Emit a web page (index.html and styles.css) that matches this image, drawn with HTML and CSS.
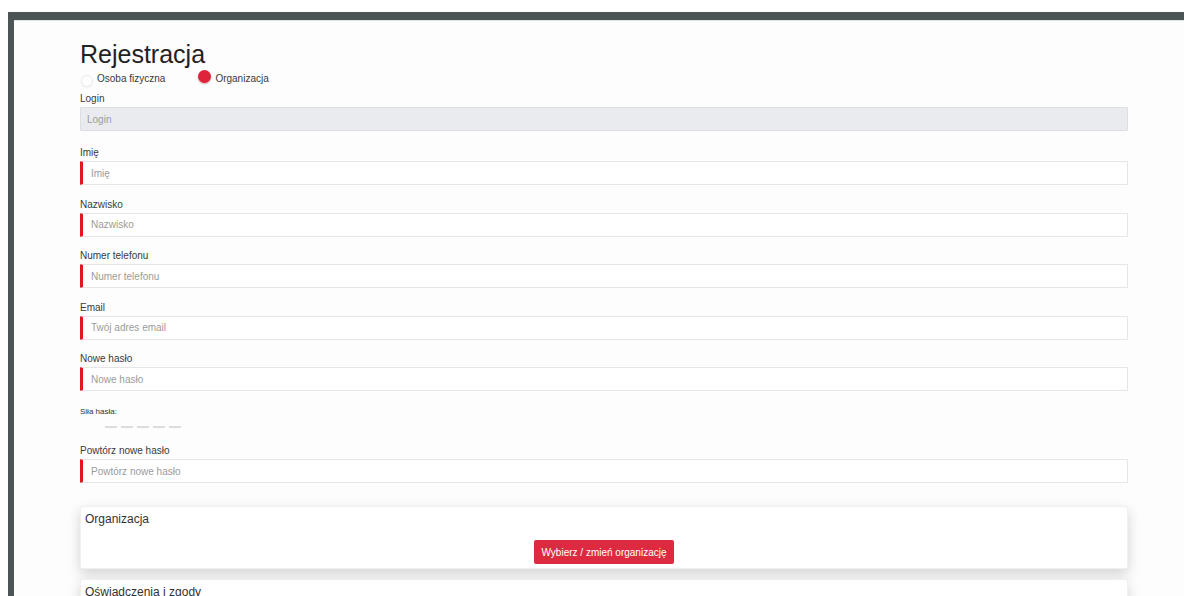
FILE: index.html
```html
<!DOCTYPE html>
<html lang="pl">
<head>
<meta charset="utf-8">
<title>Rejestracja</title>
<link rel="stylesheet" href="styles.css">
</head>
<body>
<div class="screen">
  <div class="frame">
    <main class="page">
      <h1 class="title">Rejestracja</h1>

      <div class="radios">
        <label class="radio"><span class="dot"></span>Osoba fizyczna</label>
        <label class="radio radio--on"><span class="dot"></span>Organizacja</label>
      </div>

      <div class="field field--login">
        <label class="field-label">Login</label>
        <input class="input input--disabled" placeholder="Login" readonly>
      </div>

      <div class="field">
        <label class="field-label">Imię</label>
        <input class="input input--req" placeholder="Imię">
      </div>

      <div class="field">
        <label class="field-label">Nazwisko</label>
        <input class="input input--req" placeholder="Nazwisko">
      </div>

      <div class="field">
        <label class="field-label">Numer telefonu</label>
        <input class="input input--req" placeholder="Numer telefonu">
      </div>

      <div class="field">
        <label class="field-label">Email</label>
        <input class="input input--req" placeholder="Twój adres email">
      </div>

      <div class="field">
        <label class="field-label">Nowe hasło</label>
        <input class="input input--req" type="password" placeholder="Nowe hasło">
      </div>

      <div class="strength">
        <div class="strength-label">Siła hasła:</div>
        <div class="strength-bars"><span></span><span></span><span></span><span></span><span></span></div>
      </div>

      <div class="field field--repeat">
        <label class="field-label">Powtórz nowe hasło</label>
        <input class="input input--req" type="password" placeholder="Powtórz nowe hasło">
      </div>

      <section class="card card--first">
        <h2 class="card-title">Organizacja</h2>
        <div class="card-actions">
          <button class="btn-danger" type="button">Wybierz / zmień organizację</button>
        </div>
      </section>

      <section class="card">
        <h2 class="card-title">Oświadczenia i zgody</h2>
      </section>
    </main>
  </div>
</div>
</body>
</html>
```

FILE: styles.css
```css
* {
  box-sizing: border-box;
}

html,
body {
  margin: 0;
  height: 596px;
  overflow: hidden;
  background: #ffffff;
  font-family: "Liberation Sans", Arial, sans-serif;
  color: #333;
}

.screen {
  height: 596px;
  padding: 12px 0 0 8px;
}

.frame {
  height: 100%;
  border-top: 8px solid #4b5556;
  border-left: 6px solid #4b5556;
  background: #fdfdfd;
  box-shadow: inset 0 1px 0 #dfe6e2;
}

/* page column: flex keeps sibling margins from collapsing */
.page {
  display: flex;
  flex-direction: column;
  padding: 19px 56px 0 66px;
}

.title {
  margin: 0;
  font-size: 25px;
  font-weight: 400;
  line-height: 30px;
  color: #222;
}

/* account type switch */
.radios {
  display: flex;
  align-items: center;
  gap: 33px;
  height: 18px;
  margin: 1px 0 0 1px;
}

.radio {
  display: flex;
  align-items: center;
  gap: 4px;
  font-size: 10px;
  line-height: 12px;
  color: #3a3a3a;
}

.dot {
  width: 12px;
  height: 12px;
  border-radius: 50%;
  background: #fff;
  border: 1px solid #ececec;
  box-shadow: 0 1px 2px rgba(0, 0, 0, 0.06);
  margin-top: 3px;
}

.radio--on .dot {
  width: 13px;
  height: 13px;
  border: none;
  background: #e0223b;
  box-shadow: 0 1px 2px rgba(120, 0, 0, 0.35);
  margin: 0 0 5px;
}

/* form fields */
.field {
  margin-bottom: 13.5px;
}

.field--login {
  margin-top: 5px;
  margin-bottom: 16px;
}

.field-label {
  display: block;
  font-size: 10px;
  line-height: 12px;
  margin-bottom: 2px;
  color: #3a3a3a;
}

.input {
  display: block;
  width: 100%;
  height: 24px;
  padding: 0 7px;
  border: 1px solid #e6e6e6;
  border-radius: 1px;
  background: #fff;
  font-family: "Liberation Sans", Arial, sans-serif;
  font-size: 10px;
  color: #333;
  outline: none;
}

.input::placeholder {
  color: #9b9b9b;
}

.input--disabled {
  background: #e9ebee;
  border-color: #dcdfe2;
  padding-left: 6px;
}

.input--req {
  border-left: 3px solid #e4161e;
  padding-left: 8px;
}

/* password strength meter */
.strength {
  margin-top: 1px;
}

.strength-label {
  font-size: 8px;
  line-height: 12px;
  color: #333;
}

.strength-bars {
  display: flex;
  gap: 4px;
  margin: 8.5px 0 0 25px;
}

.strength-bars span {
  width: 12px;
  height: 2px;
  background: #dcdcdc;
}

.field--repeat {
  margin-top: 17px;
}

/* panels */
.card {
  background: #fff;
  border: 1px solid #f0f0f0;
  border-radius: 2px;
  padding: 5px 4px 4px;
  box-shadow: 0 5px 13px rgba(0, 0, 0, 0.17);
  margin-top: 10px;
}

.card--first {
  margin-top: 9.5px;
}

.card-title {
  margin: 0;
  font-size: 12px;
  font-weight: 400;
  line-height: 14px;
  color: #333;
}

.card-actions {
  display: flex;
  justify-content: center;
  margin-top: 14px;
}

.btn-danger {
  height: 24px;
  padding: 0 8px;
  border: none;
  border-radius: 2px;
  background: #de2a40;
  color: #fff;
  font-family: "Liberation Sans", Arial, sans-serif;
  font-size: 10px;
  cursor: pointer;
}
```
